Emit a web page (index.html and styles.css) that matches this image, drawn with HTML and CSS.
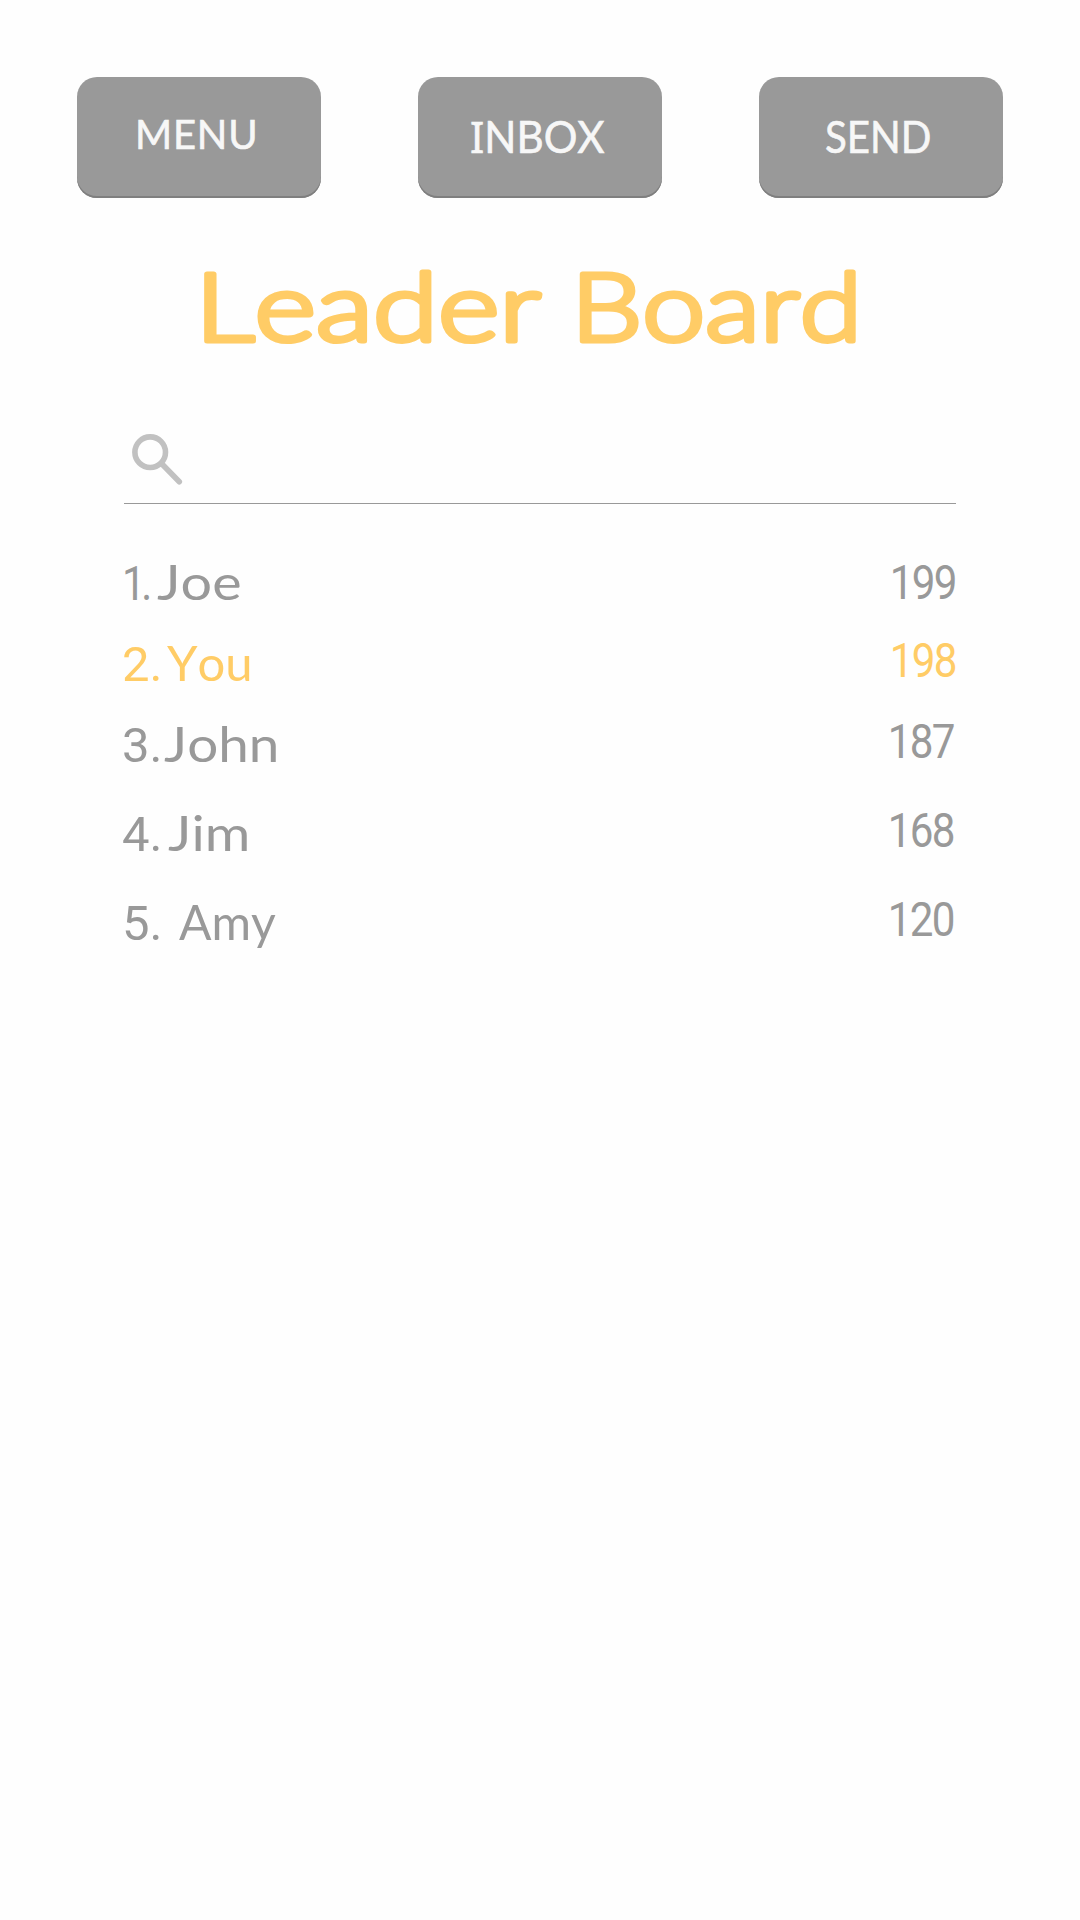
FILE: index.html
```html
<!DOCTYPE html>
<html lang="en">
<head>
<meta charset="utf-8">
<title>Leader Board</title>
<link rel="stylesheet" href="styles.css">
</head>
<body>
<main class="screen">
  <nav class="nav">
    <button class="nav-button menu">MENU</button>
    <button class="nav-button inbox"><span class="label"><span class="serif-i">I</span>NBOX</span></button>
    <button class="nav-button send"><span class="label">SEND</span></button>
  </nav>
  <h1 class="title">
    <svg class="title-art" viewBox="0 0 680 122">
      <text x="-3" y="97.5" textLength="346" lengthAdjust="spacingAndGlyphs">Leader</text>
      <text x="373" y="97.5" textLength="291" lengthAdjust="spacingAndGlyphs">Board</text>
    </svg>
  </h1>
  <div class="search">
    <svg class="search-icon" viewBox="0 0 52 52" fill="none" stroke="currentColor" stroke-width="5.6" stroke-linecap="round" aria-hidden="true">
      <circle cx="18.2" cy="18.2" r="15.3"/>
      <path d="M29.5 29.5 47.3 47.8"/>
    </svg>
  </div>
  <ol class="board">
    <li class="row joe"><span class="name"><span class="rank">1.</span><span class="player">Joe</span></span><span class="score">199</span></li>
    <li class="row you"><span class="name"><span class="rank">2.</span><span class="player">You</span></span><span class="score">198</span></li>
    <li class="row john"><span class="name"><span class="rank">3.</span><span class="player">John</span></span><span class="score">187</span></li>
    <li class="row jim"><span class="name"><span class="rank">4.</span><span class="player">Jim</span></span><span class="score">168</span></li>
    <li class="row amy"><span class="name"><span class="rank">5. </span><span class="player">Amy</span></span><span class="score">120</span></li>
  </ol>
</main>
</body>
</html>
```
FILE: styles.css
```css
* { box-sizing: border-box; }
body {
  margin: 0;
  background: #fefefe;
  color: #999;
  font-family: Lato, "Liberation Sans", sans-serif;
  font-kerning: none;
  font-variant-ligatures: none;
}
.screen { width: 1080px; height: 1920px; padding: 77px 77px 0; overflow: hidden; }
.nav { display: flex; justify-content: space-between; }
.nav-button {
  width: 244px;
  height: 121px;
  padding: 0 0 4px;
  border: 0;
  border-radius: 20px;
  background: #999;
  box-shadow: inset 0 -2px 0 #7f7f7f;
  color: #f7f7f7;
  font: 400 44px/54px Lato, "Liberation Sans", sans-serif;
  font-kerning: none;
  text-align: left;
  -webkit-text-stroke: 0.6px #f7f7f7;
}
.label, .rank, .player, .score { display: inline-block; transform-origin: 0 50%; }
.menu { padding: 0 0 8px 58px; font-size: 40px; letter-spacing: 0.8px; }
.inbox { padding-left: 52px; }
.send { padding-left: 66px; }
.inbox .label { transform: scaleX(0.957); }
.send .label { transform: scaleX(0.915); }
.serif-i { font-family: "Noto Sans", sans-serif; }
.title { margin: 45px 0 0; padding-left: 121px; font-size: 94px; font-weight: 300; line-height: 0; }
.title-art {
  display: block;
  width: 680px;
  height: 122px;
  overflow: visible;
  fill: #ffcc66;
  stroke: #ffcc66;
  stroke-width: 5px;
  stroke-linejoin: round;
}
.search {
  height: 84px;
  margin: 55px 47px 0 47px;
  padding: 14px 0 0 8px;
  border-bottom: 1px solid #999;
  color: #c1c1c1;
}
.search-icon { display: block; width: 52px; height: 52px; }
.board { margin: 48px 47px 0 45px; padding: 0; list-style: none; font-size: 49px; line-height: 59px; }
.row { display: flex; justify-content: space-between; height: 59px; margin-bottom: 22px; white-space: pre; }
.john, .jim { margin-bottom: 30px; }
.rank, .score { font-family: Roboto, "Liberation Sans", sans-serif; }
.rank { width: 42px; }
.score { margin-top: 1px; letter-spacing: -2px; transform: scaleX(0.86); transform-origin: 100% 50%; }
.row + .row .score { margin-top: -2px; }
.john .score, .jim .score, .amy .score { margin-right: 2px; }
.joe .player { transform: scaleX(1.137); }
.john .player { transform: scaleX(1.118); }
.jim .player { transform: scaleX(1.13); }
.amy .player { transform: scaleX(0.98); }
.joe .rank { width: 35px; letter-spacing: -5px; transform: scaleX(0.85); }
.you .rank { width: 45px; }
.jim .rank { width: 46px; }
.amy .rank { width: 57px; }
.you { color: #ffcc66; }
```
